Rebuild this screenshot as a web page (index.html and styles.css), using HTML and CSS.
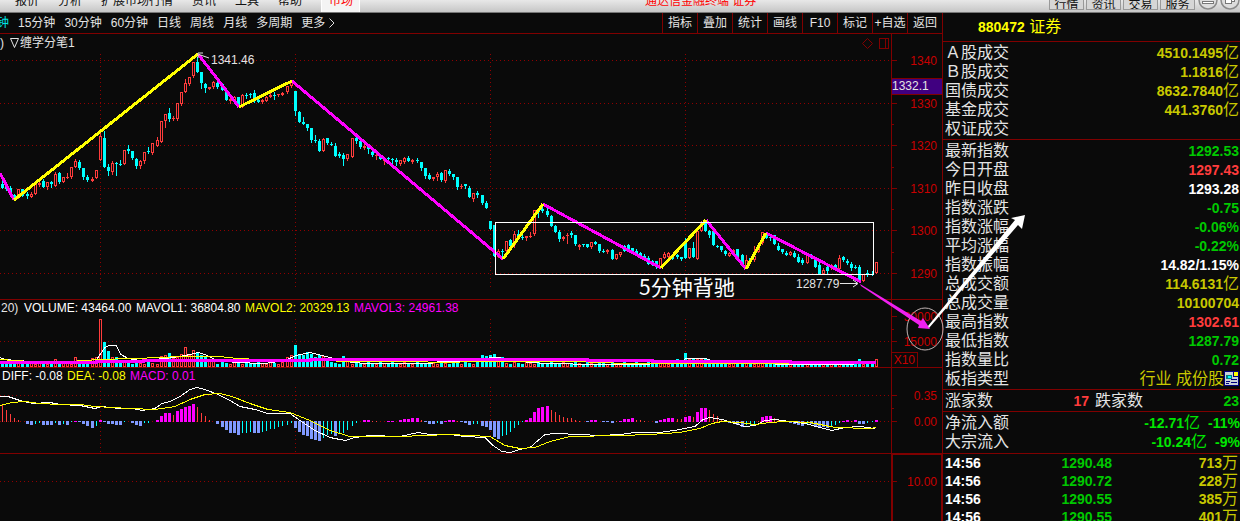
FILE: index.html
```html
<!DOCTYPE html>
<html lang="zh-CN">
<head>
<meta charset="utf-8">
<title>880472 证券</title>
<link rel="stylesheet" href="styles.css">
</head>
<body>
<div class="app">
  <header class="topbar">
    <nav class="menu">
      <a href="#">报价</a><a href="#">分析</a><a href="#">扩展市场行情</a><a href="#">资讯</a><a href="#">工具</a><a href="#">帮助</a>
    </nav>
    <a href="#" class="tab">市场</a>
    <div class="title">通达信金融终端 证券</div>
    <div class="actions">
      <button>行情</button><button>资讯</button><button>交易</button><button>服务</button>
      <svg class="winbtns" width="44" height="13" viewBox="0 0 44 13">
        <g fill="#dcdcdc" stroke="#8a8a8a" stroke-width="1.5"><circle cx="12" cy="0" r="9"/><circle cx="34" cy="0" r="9"/></g>
        <g fill="#fff" stroke="#777"><rect x="6.500" y="1.500" width="11" height="2"/><rect x="32.500" y="-5.500" width="6" height="7"/><rect x="29.500" y="-2.500" width="6" height="6"/></g>
      </svg>
    </div>
  </header>
  <main class="main">
    <section class="chart">
      <div class="toolbar">
        <nav class="periods">
          <a href="#" class="current">钟</a><a href="#">15分钟</a><a href="#">30分钟</a><a href="#">60分钟</a><a href="#">日线</a><a href="#">周线</a><a href="#">月线</a><a href="#">多周期</a><a href="#">更多<svg width="6" height="10" viewBox="0 0 6 10"><path d="M.5 .5L5 5L.5 9.500" fill="none" stroke="#e0e0e0"/></svg></a>
        </nav>
        <div class="tools">
          <button>指标</button><button>叠加</button><button>统计</button><button>画线</button><button>F10</button><button>标记</button><button>+自选</button><button>返回</button>
        </div>
      </div>
      <svg class="plot" viewBox="0 34 942 487">
        <g class="grid">
          <path d="M0 60.500H890M0 103.500H890M0 145.500H890M0 188.500H890M0 230.500H890M0 273.500H890M0 341.500H890M0 395.500H890M0 421.500H890M0 481.500H890"/>
          <path d="M100.500 54V288M295.500 54V288M490.500 54V288M685.500 54V288M100.500 319V366M295.500 319V366M490.500 319V366M685.500 319V366M100.500 387V453M295.500 387V453M490.500 387V453M685.500 387V453"/>
        </g>
        <path class="frame" d="M0 299.500H942M0 367.500H942M0 453.500H942M891.500 34V521M892 60.500H897M892 103.500H897M892 124.500H894M892 145.500H897M892 167.500H894M892 188.500H897M892 209.500H894M892 230.500H897M892 252.500H894M892 273.500H897M892 316.500H897M892 329.500H894M892 341.500H897M892 395.500H897M892 408.500H894M892 421.500H897M892 481.500H897M892 352.500H917.500V367"/>
        <path class="frame thick" d="M892 521V454H942V521"/>
        <path class="frame soft" d="M867.500 38.500L872.500 43.500L867.500 48.500L862.500 43.500Z"/>
        <path class="frame" d="M879.500 38.500H888.500V48.500H879.500ZM885.500 38V49"/>
        <rect class="cursor" x="891.500" y="78.500" width="51" height="16"/>
        <g class="scale">
          <text x="937" y="65">1340</text><text x="937" y="108">1330</text><text x="937" y="150">1320</text><text x="937" y="193">1310</text><text x="937" y="235">1300</text><text x="937" y="278">1290</text>
          <text x="937" y="321">30000</text><text x="937" y="346">15000</text><text x="915" y="364">X10</text>
          <text x="937" y="400">0.35</text><text x="937" y="426">0.00</text><text x="937" y="486">10.00</text>
        </g>
        <g id="candles"></g>
        <g id="volumes"></g>
        <g class="line">
          <polyline class="white" points="0,357 5,359 30,361 95,361 98,357 105,347 109,345 116,345 121,354 128,358 140,360 165,358 180,356 190,354 198,352 205,354 215,359 235,362 265,363 285,360 296,355 310,352 318,354 330,357 345,361 365,363 430,363 440,361 470,361 485,358 493,357 508,358 520,361 545,363 600,364 640,364 680,362 686,358 705,358 715,361 750,363 800,364 850,364 875,361"/>
          <polyline class="yellow" points="0,359 30,361 70,361 100,359 130,358 165,357 175,356 220,356 237,358 260,359 290,360 380,361 415,361 440,362 480,361 580,361 595,362 630,363 690,363 750,363 870,363"/>
          <path class="mavol3" d="M0 362H96V361H143V360H310V359H587V360H652V361H790V362H876"/>
        </g>
        <g id="macd"></g>
        <g class="line">
          <polyline class="white" points="0,396 8,396 20,400 33,403 50,402 60,404 80,405 95,408 101,406 120,408 133,408 142,410 155,408 162,403 170,401 180,396 190,389 197,387 205,389 218,394 230,400 240,406 255,409 268,413 290,413 300,420 315,430 330,437 345,440 355,437 370,435 400,436 418,432 430,434 450,434 465,436 485,437 493,445 502,451 510,452 520,449 530,447 545,434 555,433 580,434 600,435 620,434 635,432 660,432 680,429 695,426 703,419 710,417 722,419 735,423 745,426 755,425 765,420 775,419 790,421 805,423 820,427 832,430 845,427 860,426 875,428"/>
          <polyline class="yellow" points="0,405 12,402 25,401 40,403 60,404 80,404 95,406 130,408 155,409 175,406 190,399 205,394 220,393 232,396 250,403 268,409 290,412 310,420 330,430 350,436 400,436 450,434 490,436 505,445 520,448 535,447 550,441 570,436 620,435 650,434 680,432 700,428 712,423 722,421 740,422 755,424 770,422 785,421 810,422 835,427 870,428 876,427"/>
        </g>
        <g class="strokes">
          <path class="magenta" d="M0 173L14 200M198 54L239 107M292 81L503 259M543 204L661 268M706 220L746 269M766 233L861 282"/>
          <path class="yellow" d="M14 200L198 54M239 107L292 81M503 259L543 204M661 268L706 220M746 269L766 233"/>
        </g>
        <rect class="zone" x="495.500" y="222.500" width="378" height="52"/>
        <path class="leader" d="M209 58L199 54.500M203 53H198V58M840 283.500H857M853 280L858 283.500L853 287"/>
        <g class="legend">
          <text x="0" y="47" text-anchor="start">)</text>
          <path class="leader" d="M10.500 38.500H18.500L14.500 47.500Z"/>
          <text x="20" y="47">缠学分笔1</text>
          <text x="211" y="64">1341.46</text>
          <text x="796" y="288">1287.79</text>
          <text class="price" x="892" y="90">1332.1</text>
          <text x="1" y="312">20)</text>
          <text class="w" x="24" y="312">VOLUME: 43464.00</text>
          <text class="w" x="136" y="312">MAVOL1: 36804.80</text>
          <text class="y" x="245" y="312">MAVOL2: 20329.13</text>
          <text class="m" x="354" y="312">MAVOL3: 24961.38</text>
          <text class="w" x="2" y="380">DIFF: -0.08</text>
          <text class="y" x="67" y="380">DEA: -0.08</text>
          <text class="m" x="130" y="380">MACD: 0.01</text>
          <text class="note" x="639" y="295">5分钟背驰</text>
        </g>
        <ellipse class="ring" cx="925" cy="329" rx="18" ry="21"/>
        <path class="down-arrow" d="M860 284L921 321L923 318L930 329L918 328L919 325L861 286Z"/>
        <path class="up-arrow" d="M928 326L1015 220L1011 218L1025 215L1022 229L1018 225L929 328Z"/>
      </svg>
    </section>
    <aside class="quote">
      <h1><b>880472</b> 证券</h1>
      <dl class="stats">
        <div><dt>Ａ股成交</dt><dd class="gold"><b>4510.1495</b>亿</dd></div>
        <div><dt>Ｂ股成交</dt><dd class="gold"><b>1.1816</b>亿</dd></div>
        <div><dt>国债成交</dt><dd class="gold"><b>8632.7840</b>亿</dd></div>
        <div><dt>基金成交</dt><dd class="gold"><b>441.3760</b>亿</dd></div>
        <div><dt>权证成交</dt><dd></dd></div>
      </dl>
      <dl class="stats">
        <div><dt>最新指数</dt><dd class="down"><b>1292.53</b></dd></div>
        <div><dt>今日开盘</dt><dd class="up"><b>1297.43</b></dd></div>
        <div><dt>昨日收盘</dt><dd class="flat"><b>1293.28</b></dd></div>
        <div><dt>指数涨跌</dt><dd class="down"><b>-0.75</b></dd></div>
        <div><dt>指数涨幅</dt><dd class="down"><b>-0.06%</b></dd></div>
        <div><dt>平均涨幅</dt><dd class="down"><b>-0.22%</b></dd></div>
        <div><dt>指数振幅</dt><dd class="flat"><b>14.82/1.15%</b></dd></div>
        <div><dt>总成交额</dt><dd class="gold"><b>114.6131</b>亿</dd></div>
        <div><dt>总成交量</dt><dd class="gold"><b>10100704</b></dd></div>
        <div><dt>最高指数</dt><dd class="up"><b>1302.61</b></dd></div>
        <div><dt>最低指数</dt><dd class="down"><b>1287.79</b></dd></div>
        <div><dt>指数量比</dt><dd class="down"><b>0.72</b></dd></div>
        <div><dt>板指类型</dt><dd class="gold">行业 成份股<svg width="15" height="15" viewBox="0 0 15 15" shape-rendering="crispEdges"><path fill="#000080" d="M0 0h15v15H0z"/><path fill="#c8d0d8" d="M1 1h8v5h5v8H1z"/><path fill="#ff0" d="M10 1h4v4h-4z"/><path fill="#008080" d="M2 4h6v4H2z"/><path fill="#0ff" d="M4 5h3v2H4z"/><path fill="#000080" d="M2 10h4v1H2zM7 8h6v1H7zM7 11h6v1H7zM2 12h3v1H2z"/></svg></dd></div>
      </dl>
      <dl class="stats pair">
        <div><dt>涨家数</dt><dd class="up"><b>17</b></dd></div>
        <div><dt>跌家数</dt><dd class="down"><b>23</b></dd></div>
      </dl>
      <dl class="stats flow">
        <div><dt>净流入额</dt><dd class="bright"><b>-12.71</b>亿</dd><dd class="bright pct"><b>-11%</b></dd></div>
        <div><dt>大宗流入</dt><dd class="bright"><b>-10.24</b>亿</dd><dd class="bright pct"><b>-9%</b></dd></div>
      </dl>
      <table class="ticks">
        <tbody>
          <tr><td class="flat">14:56</td><td class="down">1290.48</td><td class="gold">713<span>万</span></td></tr>
          <tr><td class="flat">14:56</td><td class="down">1290.72</td><td class="gold">228<span>万</span></td></tr>
          <tr><td class="flat">14:56</td><td class="down">1290.55</td><td class="gold">385<span>万</span></td></tr>
          <tr><td class="flat">14:56</td><td class="down">1290.55</td><td class="gold">401<span>万</span></td></tr>
        </tbody>
      </table>
    </aside>
  </main>
</div>
<script src="chart.js"></script>
</body>
</html>
```

FILE: styles.css
```css
* { box-sizing: border-box; }
body {
  margin: 0;
  background: #0a0a0a;
  color: #e4e4e4;
  font: 12px/20px "Liberation Sans", "Noto Sans CJK SC", sans-serif;
}
a { color: inherit; text-decoration: none; }
button { font: inherit; color: inherit; background: none; border: 0; padding: 0; }
.app { height: 100vh; display: flex; flex-direction: column; overflow: hidden; }

.topbar {
  flex: none;
  display: flex;
  height: 13px;
  overflow: hidden;
  color: #111;
  line-height: 12px;
  background: linear-gradient(#e8e8e8, #c6c6c6);
  border-bottom: 1px solid #777;
}
.menu { display: flex; gap: 19px; padding-left: 15px; margin-top: -5px; width: 321px; white-space: nowrap; }
.tab { width: 39px; height: 12px; padding-left: 7px; line-height: 2px; color: #f00; background: #f4f4f4; border: solid #fff; border-width: 0 1px; }
.title { flex: 1; margin-top: -5px; padding-left: 285px; color: #f00; white-space: nowrap; }
.actions { display: flex; gap: 2px; }
.actions button { width: 35px; height: 10px; line-height: 2px; overflow: hidden; background: #d6d6d6; border: solid #999; border-width: 0 1px 1px; }
.winbtns { margin-left: -1px; }

.main { flex: 1; display: flex; min-height: 0; }
.chart { flex: 1; min-width: 0; position: relative; z-index: 1; }
.toolbar { display: flex; justify-content: space-between; height: 21px; border-bottom: 1px solid #800000; white-space: nowrap; }
.periods { display: flex; gap: 9px; margin-left: -3px; }
.periods svg { margin-left: 4px; vertical-align: -1px; }
.current { color: #00e5e5; }
.tools { display: flex; }
.tools button { width: 35px; border-left: 1px solid #800000; }

.plot { display: block; width: 100%; height: auto; overflow: visible; pointer-events: none; }
.grid path { stroke: #900000; stroke-dasharray: 1 3; fill: none; shape-rendering: crispEdges; }
.frame { stroke: #800000; fill: none; shape-rendering: crispEdges; }
.thick { stroke-width: 2; }
.soft { shape-rendering: auto; }
.cursor { fill: #400080; stroke: #800000; }
.scale text { fill: #c80000; text-anchor: end; }
.legend text { fill: #e4e4e4; }
.legend .w { fill: #fff; }
.legend .y { fill: #ff0; }
.legend .m { fill: #f0f; }
.legend .note { fill: #fff; font-size: 21px; font-family: "Noto Sans CJK SC", sans-serif; }
.rise { fill: #0a0a0a; stroke: #ff3c3c; }
.fall { fill: #0ff; stroke: #0ff; }
#candles, #volumes, #macd, .line, .strokes, .zone { shape-rendering: crispEdges; }
.line * { fill: none; stroke-width: 1; transform: translateY(.5px); }
.white { stroke: #fff; }
.yellow { stroke: #ff0; }
.magenta { stroke: #f0f; }
.line .mavol3 { stroke: #f0f; stroke-width: 3; }
.strokes path { fill: none; stroke-width: 3; }
.zone { fill: none; stroke: #fff; }
.leader { fill: none; stroke: #e4e4e4; }
.ring { fill: none; stroke: #c0b4b4; stroke-width: 1; }
.down-arrow { fill: #f020f0; }
.up-arrow { fill: #fff; }
.bar-m { fill: #f0f; }
.bar-r { fill: #ff3c3c; }
.bar-b { fill: #8099ff; }
.bar-c { fill: #0ff; }

.quote { flex: none; width: 298px; border-left: 1px solid #800000; font-size: 16px; line-height: 19px; }
.quote b, .ticks td { font-size: 14px; font-weight: bold; }
.quote h1 { margin: 0; height: 29px; padding-left: 35px; font-size: 16px; font-weight: normal; line-height: 27px; color: #ff0; border-bottom: 1px solid #800000; }
.stats { margin: 0; padding: 1px 1px 1px 2px; border-bottom: 1px solid #800000; }
.stats div { display: flex; height: 19px; white-space: nowrap; }
.stats dt { flex: 1; }
.stats dd { margin: 0; }
.stats dd svg { vertical-align: -2px; }
.pair { display: grid; grid-template-columns: 144px 1fr; column-gap: 6px; }
.flow { padding: 1px 0 2px 2px; }
.pct { padding-left: 8px; }
.ticks { width: 100%; border-collapse: collapse; line-height: 18px; }
.ticks tr { height: 18px; }
.ticks td { height: 18px; padding: 0 2px; line-height: 18px; }
.ticks td:nth-child(2), .ticks td:nth-child(3) { text-align: right; }
.ticks td:nth-child(2) { width: 90px; }
.ticks td:nth-child(3) { width: 126px; }
.ticks span { font-size: 16px; font-weight: normal; line-height: 16px; }
.gold { color: #c8c800; }
.up { color: #ff3c3c; }
.down { color: #00c800; }
.flat { color: #fff; }
.bright { color: #00e600; }
```

FILE: chart.js
```js
// Each candle: direction (u/d), high, body top, body bottom, low.
const candles = `
d180 184 188 188,d185 187 189 190,d186 188 193 193,d194 195 198 198,u189 189 198 198,d189 189 196 196,d192 194 196 198,u192 194 197 197,u184 184 194 194,u181 183 185 186,d179 181 187 187,u182 182 187 189,
d181 182 184 187,u172 174 186 186,d172 173 182 183,u177 177 182 182,u173 177 178 178,u167 167 177 178,u159 161 167 167,d160 162 168 169,d168 168 177 179,d175 177 180 181,u177 179 181 181,u170 170 178 178,
u133 136 160 160,d131 138 167 167,d164 167 171 175,u161 163 172 174,d162 163 164 175,d160 164 164 165,u150 150 164 164,d145 149 151 153,d151 151 158 159,d158 159 166 168,u160 161 166 168,u152 152 161 163,
d147 151 152 153,u143 143 153 154,u137 140 146 146,u121 121 142 142,u114 114 121 127,d108 113 119 121,u116 118 119 120,u103 103 119 120,u92 92 104 105,u79 83 92 92,u77 77 84 85,u62 62 76 77,
d57 62 72 72,d72 72 83 88,d83 84 88 92,u87 87 89 89,u81 82 87 88,d81 83 87 88,d84 84 90 90,d90 90 100 100,u98 99 101 103,u96 97 100 103,d97 97 105 106,u94 95 107 107,
d93 95 96 98,d93 94 95 97,d90 93 98 102,d98 100 102 102,u99 100 102 103,u96 97 101 101,u93 95 97 97,d92 95 96 99,u94 94 95 96,u92 93 95 95,u86 86 92 93,u81 81 86 87,
d91 91 111 115,d111 112 122 122,d117 122 124 124,d124 124 128 130,d128 128 140 142,d135 140 141 142,d139 141 151 151,u138 139 151 151,d138 138 143 144,d142 144 145 145,d143 146 156 156,d152 154 156 157,
d153 155 159 165,u154 154 159 160,u138 138 157 157,d133 138 141 143,d141 141 147 148,u144 146 148 149,d144 144 149 153,d150 152 155 156,u154 155 156 159,d154 155 159 159,u158 160 161 164,d157 158 159 160,
d158 159 160 163,d158 160 162 165,u160 160 164 165,u157 158 162 163,d156 158 161 161,u159 160 162 163,d158 160 161 162,d162 162 168 170,d168 168 176 178,d173 175 179 179,u177 177 179 180,u172 174 177 180,
d172 173 180 181,u170 170 181 182,d169 171 174 175,d174 174 177 179,d177 177 187 189,u184 186 187 188,d184 184 186 188,d186 188 197 197,u193 193 199 201,d191 193 195 197,d195 195 203 204,d201 203 208 208,
d221 221 229 229,d225 225 256 256,u249 251 257 257,d249 251 252 258,u241 241 251 251,d239 240 246 249,u231 234 245 247,d230 234 237 237,d232 237 238 239,u236 236 238 240,u232 236 237 237,u210 210 234 235,
d209 211 212 217,d204 209 211 212,d208 211 215 216,d215 216 226 226,d225 226 232 232,d230 232 239 241,u236 237 239 240,u233 235 236 243,d231 233 235 237,d235 235 244 245,u244 245 247 249,d244 244 245 246,
d244 244 247 247,u242 242 247 248,d241 242 244 244,d244 244 251 252,d249 251 252 252,u249 250 252 253,d249 250 259 259,u254 254 259 259,u252 252 255 256,d245 246 251 251,d244 245 251 251,d248 248 252 252,
d249 251 254 254,d252 253 257 257,d254 256 260 260,d256 258 264 264,d260 261 265 265,d261 261 266 268,u258 258 268 268,u252 254 258 258,u252 253 257 257,d256 256 259 259,d254 255 257 258,d257 257 259 260,
d238 242 258 258,u248 248 258 258,d242 248 257 257,u231 231 259 259,u221 222 231 231,d221 221 231 231,d230 231 235 237,d231 231 245 245,d245 246 247 247,d246 246 250 251,d250 251 254 255,u252 253 256 256,
u249 250 255 255,d249 249 258 258,d254 255 264 264,u255 260 268 268,d258 258 261 261,u246 256 260 261,u244 245 252 252,u232 232 243 244,d232 233 238 238,d234 237 238 240,d235 235 244 244,d243 246 250 250,
d249 249 252 253,d251 253 255 255,u251 252 255 255,d251 253 257 257,d254 257 262 262,d258 260 263 264,u254 255 263 263,d254 255 258 258,d257 257 267 267,d262 265 274 274,u268 270 274 274,d266 267 271 273,
u264 265 268 269,d264 265 269 269,u255 258 269 269,d256 257 260 261,d259 261 263 264,d262 264 268 270,d265 267 268 268,d265 267 281 281,u274 274 281 281,d270 273 275 276,d271 274 275 275,u262 262 273 273`
  .trim().split(/,\s*/).map(s => [s[0], ...s.slice(1).split(" ").map(Number)]);

// Tops of the volume bars that rise above the usual level.
const volumeTops = {13:359,18:357,22:358,23:357,24:319,25:342,26:351,27:357,28:357,29:360,39:356,40:355,41:353,42:358,43:357,44:354,45:347,46:355,47:350,48:352,49:355,50:357,51:359,52:360,70:357,71:355,72:345,73:354,74:355,75:352,76:354,77:357,78:355,79:356,80:358,84:356,85:359,118:355,119:356,120:355,121:354,122:359,123:357,166:359,168:353,169:359,170:359,171:359,172:359,173:359,211:359,215:359};

// MACD columns: m/r above the zero line, b/c below it, then the height.
const macd = ("r17 r12 r8 r4 r2 r0 b3 b4 c3 c2 b4 b4 b4 c2 b4 c3 b4 c1 m1 b1 b3 b5 b7 c5 m2 b1 b3 b3 b4 b4 c1 c0 b2 b4 b5 c2 c2 c0 m2 m6 m9 m9 r7 m11 m13 m15 m16 m18 " +
"r15 r9 r6 r2 r0 b3 b6 b9 b12 b12 b14 c12 c12 c11 b12 b12 c11 c10 c8 c8 c6 c5 c4 c2 b7 b11 b14 b15 b18 b19 b20 c17 c14 c13 b15 c13 c12 c9 c5 c2 c0 m2 m2 r1 r1 r0 r0 m1 " +
"m1 r0 m2 m3 m3 m4 m4 r2 b1 b3 b3 c2 b3 m1 m2 m2 r1 b1 b2 b4 c3 c3 b5 b6 b9 b16 b18 c15 c14 c11 c7 c4 c1 m2 m4 m10 m14 m15 m16 r12 r10 r7 r5 r4 r4 r2 r1 r0 " +
"b1 m2 m2 r0 b1 b1 b2 r1 m1 m3 m3 m4 r2 r2 r1 r0 r0 b2 m2 m3 m4 m4 r3 r3 m5 m6 r5 m10 m14 m14 r12 r8 r6 r3 r0 b2 b2 b4 b6 c4 c4 c3 r1 m5 m6 m6 r4 r2 " +
"r1 b1 b2 b3 b4 b5 c4 b3 b5 b6 b6 b7 c6 c4 c2 m1 m2 r1 m2 b3 b3 c2 c1 m2").split(" ");

const columnX = i => Math.floor(2.65 + i * 4.0625);

function add(group, tag, attrs) {
  const el = document.createElementNS("http://www.w3.org/2000/svg", tag);
  for (const key in attrs) el.setAttribute(key, attrs[key]);
  document.getElementById(group).append(el);
}

candles.forEach(([dir, high, top, bottom, low], i) => {
  const x = columnX(i);
  const cls = dir === "u" ? "rise" : "fall";
  add("candles", "path", { class: cls, d: `M${x + .5} ${high}V${low + 1}` });
  add("candles", "rect", { class: cls, x: x - .5, y: top + .5, width: 2, height: Math.max(bottom - top - 1, 0.01) });
  const v = volumeTops[i] || 362 + (i * 7 % 3);
  add("volumes", "rect", { class: cls, x: x - .5, y: v + .5, width: 2, height: 366 - v });
});

macd.forEach((item, i) => {
  const kind = item[0], h = Number(item.slice(1));
  if (!h) return;
  const wide = kind === "m" || kind === "b";
  const above = kind === "m" || kind === "r";
  add("macd", "rect", { class: "bar-" + kind, x: columnX(i) - (wide ? 1 : 0), y: above ? 422 - h : 421, width: wide ? 3 : 1, height: h });
});
```
